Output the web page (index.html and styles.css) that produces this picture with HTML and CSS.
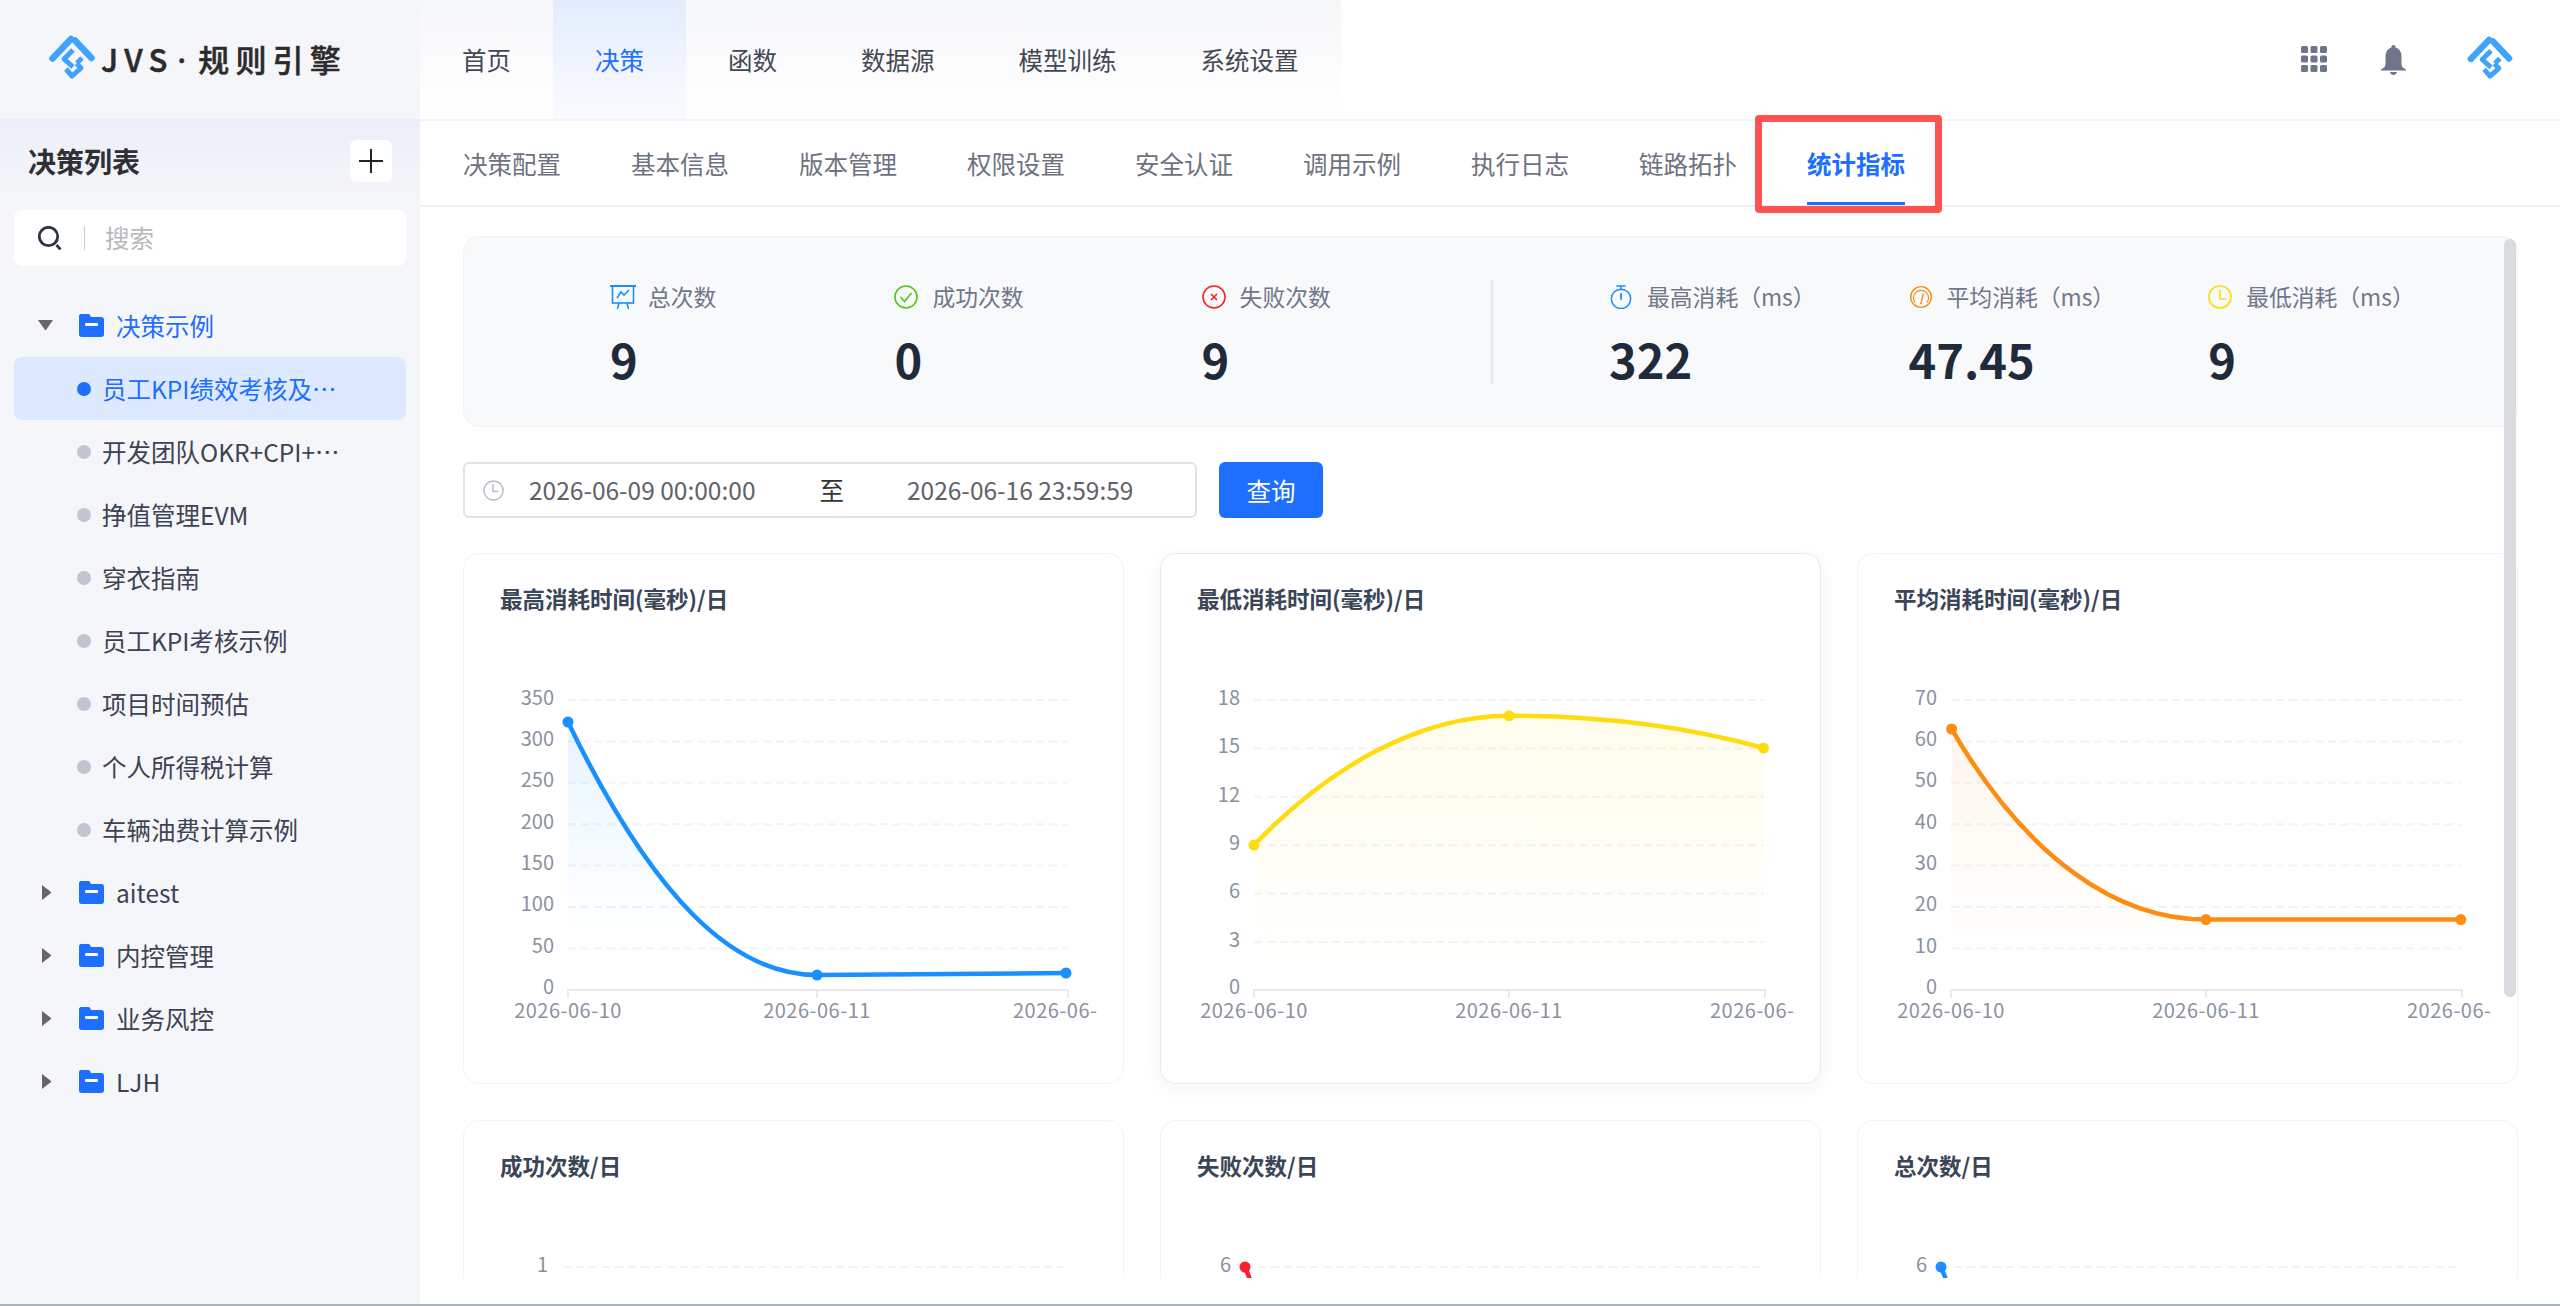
FILE: index.html
```html
<!DOCTYPE html>
<html lang="zh-CN">
<head>
    <meta charset="UTF-8">
    <meta name="viewport" content="width=device-width, initial-scale=1.0">
    <title>JVS 规则引擎 - 统计指标</title>
    <link rel="stylesheet" href="styles.css">
</head>
<body>

    <header class="topbar">
        <div class="brand">
            <svg class="brand-logo" viewBox="0 0 46 47">
                <g fill="none" stroke="#3fa2fb" stroke-linejoin="round">
                    <path d="M3.5 23.5 L22 4" stroke-width="6.5" stroke-linecap="round"/>
                    <path d="M26 5.5 L42.5 23" stroke-width="6.5" stroke-linecap="round"/>
                    <path d="M24 15 L15 24 L24 32 M33 23 L28 28" stroke-width="5"/>
                    <path d="M17 34 L23 41 L32 33 L27.5 28.5" stroke-width="5"/>
                </g>
            </svg>
            <span class="brand-name">JVS<span class="brand-dot">·</span>规则引擎</span>
        </div>
        <nav class="main-nav">
            <a class="nav-item">首页</a>
            <a class="nav-item active">决策</a>
            <a class="nav-item">函数</a>
            <a class="nav-item">数据源</a>
            <a class="nav-item">模型训练</a>
            <a class="nav-item">系统设置</a>
        </nav>
        <div class="top-actions">
            <svg class="icon-apps" viewBox="0 0 26 26" fill="#6d7588">
                <rect x="0" y="0" width="7" height="7" rx="1.5"/><rect x="9.5" y="0" width="7" height="7" rx="1.5"/><rect x="19" y="0" width="7" height="7" rx="1.5"/>
                <rect x="0" y="9.5" width="7" height="7" rx="1.5"/><rect x="9.5" y="9.5" width="7" height="7" rx="1.5"/><rect x="19" y="9.5" width="7" height="7" rx="1.5"/>
                <rect x="0" y="19" width="7" height="7" rx="1.5"/><rect x="9.5" y="19" width="7" height="7" rx="1.5"/><rect x="19" y="19" width="7" height="7" rx="1.5"/>
            </svg>
            <svg class="icon-bell" viewBox="0 0 25 30" fill="#6f768a">
                <path d="M12.5 0 C14 0 14.6 1.2 14.6 2.6 C19 4 20.5 8 20.5 12 L20.5 19 C20.5 21.5 22 23 25 24.5 L25 25.5 L0 25.5 L0 24.5 C3 23 4.5 21.5 4.5 19 L4.5 12 C4.5 8 6 4 10.4 2.6 C10.4 1.2 11 0 12.5 0 Z"/>
                <path d="M9 27 L16 27 C15.6 29 14.2 30 12.5 30 C10.8 30 9.4 29 9 27 Z"/>
            </svg>
            <svg class="user-logo" viewBox="0 0 46 47">
                <g fill="none" stroke="#3fa2fb" stroke-linejoin="round">
                    <path d="M3.5 23.5 L22 4" stroke-width="6.5" stroke-linecap="round"/>
                    <path d="M26 5.5 L42.5 23" stroke-width="6.5" stroke-linecap="round"/>
                    <path d="M24 15 L15 24 L24 32 M33 23 L28 28" stroke-width="5"/>
                    <path d="M17 34 L23 41 L32 33 L27.5 28.5" stroke-width="5"/>
                </g>
            </svg>
        </div>
    </header>

    <div class="layout">
        <aside class="sidebar">
            <div class="side-head">
                <h2>决策列表</h2>
                <button class="add-btn">
                    <svg viewBox="0 0 24 24" width="24" height="24"><path d="M12 0 V24 M0 12 H24" stroke="#222" stroke-width="2"/></svg>
                </button>
            </div>
            <div class="side-search">
                <svg viewBox="0 0 24 24" width="24" height="24" fill="none" stroke="#2d3547" stroke-width="2.8"><circle cx="10.5" cy="10.5" r="9.2"/><path d="M18.5 19 L22.5 23.5"/></svg>
                <span class="search-sep"></span>
                <span class="search-text">搜索</span>
            </div>
            <ul class="tree">
                <li class="tree-row folder open">
                    <span class="caret-down"></span>
                    <svg class="folder-icon" viewBox="0 0 25 23"><path d="M2 0 H9 C10 0 10.6 .4 11 1 L12 3 H22.5 C24 3 25 4 25 5.5 V20.5 C25 22 24 23 22.5 23 H2.5 C1 23 0 22 0 20.5 V2 C0 1 1 0 2 0 Z" fill="#1e6fff"/><rect x="6" y="9" width="13" height="3" rx="1" fill="#fff"/></svg>
                    <span class="row-text">决策示例</span>
                </li>
                <li class="tree-row leaf active"><i class="dot"></i><span class="row-text">员工KPI绩效考核及奖金计算</span></li>
                <li class="tree-row leaf"><i class="dot"></i><span class="row-text">开发团队OKR+CPI+奖金</span></li>
                <li class="tree-row leaf"><i class="dot"></i><span class="row-text">挣值管理EVM</span></li>
                <li class="tree-row leaf"><i class="dot"></i><span class="row-text">穿衣指南</span></li>
                <li class="tree-row leaf"><i class="dot"></i><span class="row-text">员工KPI考核示例</span></li>
                <li class="tree-row leaf"><i class="dot"></i><span class="row-text">项目时间预估</span></li>
                <li class="tree-row leaf"><i class="dot"></i><span class="row-text">个人所得税计算</span></li>
                <li class="tree-row leaf"><i class="dot"></i><span class="row-text">车辆油费计算示例</span></li>
                <li class="tree-row folder">
                    <span class="caret-right"></span>
                    <svg class="folder-icon" viewBox="0 0 25 23"><path d="M2 0 H9 C10 0 10.6 .4 11 1 L12 3 H22.5 C24 3 25 4 25 5.5 V20.5 C25 22 24 23 22.5 23 H2.5 C1 23 0 22 0 20.5 V2 C0 1 1 0 2 0 Z" fill="#1e6fff"/><rect x="6" y="9" width="13" height="3" rx="1" fill="#fff"/></svg>
                    <span class="row-text">aitest</span>
                </li>
                <li class="tree-row folder">
                    <span class="caret-right"></span>
                    <svg class="folder-icon" viewBox="0 0 25 23"><path d="M2 0 H9 C10 0 10.6 .4 11 1 L12 3 H22.5 C24 3 25 4 25 5.5 V20.5 C25 22 24 23 22.5 23 H2.5 C1 23 0 22 0 20.5 V2 C0 1 1 0 2 0 Z" fill="#1e6fff"/><rect x="6" y="9" width="13" height="3" rx="1" fill="#fff"/></svg>
                    <span class="row-text">内控管理</span>
                </li>
                <li class="tree-row folder">
                    <span class="caret-right"></span>
                    <svg class="folder-icon" viewBox="0 0 25 23"><path d="M2 0 H9 C10 0 10.6 .4 11 1 L12 3 H22.5 C24 3 25 4 25 5.5 V20.5 C25 22 24 23 22.5 23 H2.5 C1 23 0 22 0 20.5 V2 C0 1 1 0 2 0 Z" fill="#1e6fff"/><rect x="6" y="9" width="13" height="3" rx="1" fill="#fff"/></svg>
                    <span class="row-text">业务风控</span>
                </li>
                <li class="tree-row folder">
                    <span class="caret-right"></span>
                    <svg class="folder-icon" viewBox="0 0 25 23"><path d="M2 0 H9 C10 0 10.6 .4 11 1 L12 3 H22.5 C24 3 25 4 25 5.5 V20.5 C25 22 24 23 22.5 23 H2.5 C1 23 0 22 0 20.5 V2 C0 1 1 0 2 0 Z" fill="#1e6fff"/><rect x="6" y="9" width="13" height="3" rx="1" fill="#fff"/></svg>
                    <span class="row-text">LJH</span>
                </li>
            </ul>
        </aside>

        <main class="main">
            <div class="tabs">
                <a class="tab">决策配置</a>
                <a class="tab">基本信息</a>
                <a class="tab">版本管理</a>
                <a class="tab">权限设置</a>
                <a class="tab">安全认证</a>
                <a class="tab">调用示例</a>
                <a class="tab">执行日志</a>
                <a class="tab">链路拓扑</a>
                <a class="tab active">统计指标</a>
                <!-- red annotation box around the active tab -->
                <span class="tab-mark"></span>
            </div>

            <div class="content">
                <section class="summary">
                    <div class="stat-group left">
                        <div class="stat">
                            <div class="stat-label">
                                <svg class="stat-icon wide" viewBox="0 0 26 24" fill="none" stroke="#1890ff" stroke-width="1.6"><path d="M0 1 H26" stroke-width="2"/><rect x="2.5" y="1" width="21" height="17"/><path d="M7 13 L11 7 L14 10 L19 5"/><path d="M9 18 L7.5 24 M17 18 L18.5 24"/></svg>
                                总次数
                            </div>
                            <div class="stat-value">9</div>
                        </div>
                        <div class="stat">
                            <div class="stat-label">
                                <svg class="stat-icon" viewBox="0 0 24 24" fill="none" stroke="#52c41a" stroke-width="1.6"><circle cx="12" cy="12" r="11"/><path d="M6.5 12 L10.5 16.5 L17.5 8"/></svg>
                                成功次数
                            </div>
                            <div class="stat-value">0</div>
                        </div>
                        <div class="stat">
                            <div class="stat-label">
                                <svg class="stat-icon" viewBox="0 0 24 24" fill="none" stroke="#f5222d" stroke-width="1.6"><circle cx="12" cy="12" r="11"/><path d="M9 9 L15 15 M15 9 L9 15"/></svg>
                                失败次数
                            </div>
                            <div class="stat-value">9</div>
                        </div>
                    </div>
                    <span class="stat-sep"></span>
                    <div class="stat-group right">
                        <div class="stat">
                            <div class="stat-label">
                                <svg class="stat-icon" viewBox="0 0 24 26" fill="none" stroke="#1890ff" stroke-width="1.6"><circle cx="12" cy="15" r="10.5"/><path d="M7 1 H17 M12 1 V4.5"/><path d="M12 9 V16" stroke-width="2"/></svg>
                                最高消耗（ms）
                            </div>
                            <div class="stat-value">322</div>
                        </div>
                        <div class="stat">
                            <div class="stat-label">
                                <svg class="stat-icon" viewBox="0 0 24 26" fill="none" stroke="#fa8c16" stroke-width="1.5"><circle cx="12" cy="13" r="11.2"/><path d="M5.5 19 A8.2 8.2 0 1 1 18.5 19" stroke-width="1.3"/><path d="M14.5 9 L12.4 18" stroke-width="1.5"/><circle cx="12" cy="19.5" r="1.2" fill="#fa8c16" stroke="none"/></svg>
                                平均消耗（ms）
                            </div>
                            <div class="stat-value">47.45</div>
                        </div>
                        <div class="stat">
                            <div class="stat-label">
                                <svg class="stat-icon" viewBox="0 0 24 24" fill="none" stroke="#ffdc0f" stroke-width="1.7"><circle cx="12" cy="12" r="11"/><path d="M12 5 V14 H18"/></svg>
                                最低消耗（ms）
                            </div>
                            <div class="stat-value">9</div>
                        </div>
                    </div>
                </section>

                <div class="query-bar">
                    <div class="date-range">
                        <svg viewBox="0 0 22 24" width="21" height="23" fill="none" stroke="#b9bcc6" stroke-width="1.5"><circle cx="11" cy="12" r="10"/><path d="M10.5 5 V13 H16"/></svg>
                        <span class="date-val start">2026-06-09 00:00:00</span>
                        <span class="date-to">至</span>
                        <span class="date-val">2026-06-16 23:59:59</span>
                    </div>
                    <button class="query-btn">查询</button>
                </div>

                <div class="chart-grid">
                    <div class="chart-card">
                        <h3>最高消耗时间(毫秒)/日</h3>
                        <svg class="chart" viewBox="0 0 632 420">
                            <defs><linearGradient id="fill-a" gradientUnits="userSpaceOnUse" x1="0" y1="82" x2="0" y2="300"><stop offset="0" stop-color="#1890ff" stop-opacity=".1"/><stop offset="1" stop-color="#1890ff" stop-opacity="0"/></linearGradient></defs>
                            <g class="grid-lines">
                                <path d="M104 60 H603 M104 101.4 H603 M104 142.8 H603 M104 184.2 H603 M104 225.6 H603 M104 267 H603 M104 308.4 H603"/>
                            </g>
                            <path class="axis" d="M104 358 V350 H353 V358 M353 350 H604 V358"/>
                            <g class="y-labels" text-anchor="end">
                                <text x="90" y="64">350</text><text x="90" y="105">300</text><text x="90" y="146">250</text><text x="90" y="188">200</text><text x="90" y="229">150</text><text x="90" y="270">100</text><text x="90" y="312">50</text><text x="90" y="353">0</text>
                            </g>
                            <g class="x-labels">
                                <text x="104" y="378" text-anchor="middle">2026-06-10</text><text x="353" y="378" text-anchor="middle">2026-06-11</text><text x="549" y="378">2026-06-</text>
                            </g>
                            <path d="M104 82 C190 260 270 335 353 335 C436 335 519 334 602 333 V350 H104 Z" fill="url(#fill-a)"/>
                            <path class="line" d="M104 82 C190 260 270 335 353 335 C436 335 519 334 602 333" stroke="#1890ff"/>
                            <g fill="#1890ff"><circle cx="104" cy="82" r="5.5"/><circle cx="353" cy="335" r="5.5"/><circle cx="602" cy="333" r="5.5"/></g>
                        </svg>
                    </div>

                    <div class="chart-card hovered">
                        <h3>最低消耗时间(毫秒)/日</h3>
                        <svg class="chart" viewBox="0 0 632 420">
                            <defs><linearGradient id="fill-b" gradientUnits="userSpaceOnUse" x1="0" y1="75" x2="0" y2="330"><stop offset="0" stop-color="#fadb14" stop-opacity=".08"/><stop offset="1" stop-color="#fadb14" stop-opacity="0"/></linearGradient></defs>
                            <g class="grid-lines">
                                <path d="M93 60 H603 M93 108.4 H603 M93 156.8 H603 M93 205.2 H603 M93 253.6 H603 M93 302 H603"/>
                            </g>
                            <path class="axis" d="M93 358 V350 H348 V358 M348 350 H604 V358"/>
                            <g class="y-labels" text-anchor="end">
                                <text x="79" y="64">18</text><text x="79" y="112">15</text><text x="79" y="161">12</text><text x="79" y="209">9</text><text x="79" y="257">6</text><text x="79" y="306">3</text><text x="79" y="353">0</text>
                            </g>
                            <g class="x-labels">
                                <text x="93" y="378" text-anchor="middle">2026-06-10</text><text x="348" y="378" text-anchor="middle">2026-06-11</text><text x="549" y="378">2026-06-</text>
                            </g>
                            <path d="M93 205 C170 125 260 75.7 348 75.7 C430 75.7 520 85 602.5 108 V350 H93 Z" fill="url(#fill-b)"/>
                            <path class="line" d="M93 205 C170 125 260 75.7 348 75.7 C430 75.7 520 85 602.5 108" stroke="#ffdc0f"/>
                            <g fill="#ffdc0f"><circle cx="93" cy="205" r="5.5"/><circle cx="348" cy="75.7" r="5.5"/><circle cx="602.5" cy="108" r="5.5"/></g>
                        </svg>
                    </div>

                    <div class="chart-card">
                        <h3>平均消耗时间(毫秒)/日</h3>
                        <svg class="chart" viewBox="0 0 632 420">
                            <defs><linearGradient id="fill-c" gradientUnits="userSpaceOnUse" x1="0" y1="89" x2="0" y2="310"><stop offset="0" stop-color="#fa8c16" stop-opacity=".08"/><stop offset="1" stop-color="#fa8c16" stop-opacity="0"/></linearGradient></defs>
                            <g class="grid-lines">
                                <path d="M93 60 H603 M93 101.4 H603 M93 142.8 H603 M93 184.2 H603 M93 225.6 H603 M93 267 H603 M93 308.4 H603"/>
                            </g>
                            <path class="axis" d="M93 358 V350 H348 V358 M348 350 H604 V358"/>
                            <g class="y-labels" text-anchor="end">
                                <text x="79" y="64">70</text><text x="79" y="105">60</text><text x="79" y="146">50</text><text x="79" y="188">40</text><text x="79" y="229">30</text><text x="79" y="270">20</text><text x="79" y="312">10</text><text x="79" y="353">0</text>
                            </g>
                            <g class="x-labels">
                                <text x="93" y="378" text-anchor="middle">2026-06-10</text><text x="348" y="378" text-anchor="middle">2026-06-11</text><text x="549" y="378">2026-06-</text>
                            </g>
                            <path d="M93.6 89 C170 220 260 279.6 348 279.6 H602.8 V350 H93.6 Z" fill="url(#fill-c)"/>
                            <path class="line" d="M93.6 89 C170 220 260 279.6 348 279.6 H602.8" stroke="#ff8c12"/>
                            <g fill="#ff8c12"><circle cx="93.6" cy="89" r="5.5"/><circle cx="348" cy="279.6" r="5.5"/><circle cx="602.8" cy="279.6" r="5.5"/></g>
                        </svg>
                    </div>

                    <div class="chart-card">
                        <h3>成功次数/日</h3>
                        <svg class="chart" viewBox="0 0 632 420">
                            <g class="grid-lines"><path d="M99 60 H599"/></g>
                            <g class="y-labels" text-anchor="end"><text x="84" y="64">1</text></g>
                        </svg>
                    </div>

                    <div class="chart-card">
                        <h3>失败次数/日</h3>
                        <svg class="chart" viewBox="0 0 632 420">
                            <g class="grid-lines"><path d="M84 60 H603"/></g>
                            <g class="y-labels" text-anchor="end"><text x="70" y="64">6</text></g>
                            <path class="line" d="M84 60 L94 85" stroke="#f5222d"/>
                            <circle cx="84" cy="60" r="5.5" fill="#f5222d"/>
                        </svg>
                    </div>

                    <div class="chart-card">
                        <h3>总次数/日</h3>
                        <svg class="chart" viewBox="0 0 632 420">
                            <g class="grid-lines"><path d="M83 60 H603"/></g>
                            <g class="y-labels" text-anchor="end"><text x="69" y="64">6</text></g>
                            <path class="line" d="M83 60 L93 85" stroke="#1890ff"/>
                            <circle cx="83" cy="60" r="5.5" fill="#1890ff"/>
                        </svg>
                    </div>
                </div>

                <span class="scroll-thumb"></span>
            </div>
        </main>
    </div>

    <div class="page-line"></div>

</body>
</html>
```

FILE: styles.css
```css
/* Basic Styles */
* {
    box-sizing: border-box;
}

html,
body {
    margin: 0;
    height: 1306px;
    overflow: hidden;
}

body {
    font-family: "Noto Sans CJK SC", "Noto Sans", sans-serif;
    font-size: 24.5px;
    background-color: #fff;
    color: #3d4354;
}

h2,
h3,
ul {
    margin: 0;
    padding: 0;
}

/* Top bar */
.topbar {
    display: flex;
    height: 119px;
}

.brand {
    width: 420px;
    display: flex;
    align-items: center;
    padding-left: 49px;
    background-color: #f5f6f9;
}

.brand-logo {
    width: 46px;
    height: 47px;
    margin-top: -3px;
}

.brand-name {
    margin-left: 6px;
    font-size: 31px;
    font-weight: 500;
    letter-spacing: 6.2px;
    color: #2b2b2b;
    line-height: 40px;
    -webkit-text-stroke: 0.5px #2b2b2b;
}

/* latin dot, the CJK one is a full em wide */
.brand-dot {
    margin: 0 6px 0 4px;
    font-family: "Noto Sans", sans-serif;
}

.main-nav {
    display: flex;
    background: linear-gradient(180deg, #f6f7f9 0%, #fff 100%);
}

.nav-item {
    padding: 0 42px;
    line-height: 119px;
    color: #434854;
}

.nav-item.active {
    color: #1e6fff;
    background: linear-gradient(180deg, #e3ecfd 0%, #fafbff 100%);
}

.top-actions {
    margin-left: auto;
    display: flex;
    align-items: center;
    padding-right: 47px;
}

.icon-apps {
    width: 26px;
    height: 26px;
    margin-top: -1px;
}

.icon-bell {
    width: 25px;
    height: 30px;
    margin-left: 54px;
    margin-top: 0;
}

.user-logo {
    width: 46px;
    height: 46px;
    margin-left: 61px;
    margin-top: -1px;
}

.layout {
    display: flex;
    height: 1185px;
}

/* Sidebar */
.sidebar {
    width: 420px;
    flex-shrink: 0;
    background: linear-gradient(180deg, #ebeff8 0, #f5f6f9 85px);
}

.side-head {
    display: flex;
    align-items: center;
    justify-content: space-between;
    height: 42px;
    margin-top: 21px;
    padding: 0 28px;
}

.side-head h2 {
    font-size: 28px;
    font-weight: 700;
    color: #2f3033;
}

.add-btn {
    width: 42px;
    height: 42px;
    padding: 0;
    border: none;
    border-radius: 6px;
    background-color: #fff;
    display: flex;
    align-items: center;
    justify-content: center;
}

.side-search {
    display: flex;
    align-items: center;
    height: 56px;
    margin: 28px 14px 0;
    padding-left: 24px;
    border-radius: 8px;
    background-color: #fff;
}

.search-sep {
    width: 1px;
    height: 24px;
    margin: 0 20px 0 22px;
    background-color: #c9ccd3;
}

.search-text {
    color: #b8b9bd;
    padding-bottom: 2px;
}

.tree {
    list-style: none;
    margin-top: 28px;
}

.tree-row {
    display: flex;
    align-items: center;
    height: 63px;
    margin: 0 14px;
    border-radius: 8px;
}

.row-text {
    white-space: nowrap;
    overflow: hidden;
    text-overflow: ellipsis;
}

.folder {
    padding-left: 24px;
}

.folder.open .row-text {
    color: #1e6fff;
}

.caret-down,
.caret-right {
    width: 15px;
    height: 15px;
    margin-right: 26px;
    flex-shrink: 0;
}

.caret-down {
    border-left: 7.5px solid transparent;
    border-right: 7.5px solid transparent;
    border-top: 10px solid #666;
    margin-top: 4px;
}

.caret-right {
    border-top: 7.5px solid transparent;
    border-bottom: 7.5px solid transparent;
    border-left: 9px solid #666;
    margin-left: 4px;
    margin-right: 22px;
}

.folder-icon {
    width: 25px;
    height: 23px;
    margin-right: 12px;
    flex-shrink: 0;
}

.leaf {
    padding-left: 63px;
}

.leaf .dot {
    width: 14px;
    height: 14px;
    margin-right: 11px;
    border-radius: 50%;
    background-color: #c2c4d0;
    flex-shrink: 0;
}

.leaf .row-text {
    max-width: 238px;
}

.leaf.active {
    background-color: #dde9ff;
    color: #1e6fff;
}

.leaf.active .dot {
    background-color: #1e6fff;
}

/* Main area */
.main {
    flex: 1;
    min-width: 0;
    display: flex;
    flex-direction: column;
    padding-bottom: 26px;
}

.tabs {
    position: relative;
    display: flex;
    height: 88px;
    padding-left: 8px;
    border-top: 2px solid #f3f4f6;
    border-bottom: 2px solid #eef0f3;
}

.tab {
    position: relative;
    padding: 0 35px;
    line-height: 86px;
    color: #6d7280;
}

.tab.active {
    color: #1e6fff;
    font-weight: 700;
}

.tab.active::after {
    content: "";
    position: absolute;
    left: 35px;
    right: 35px;
    bottom: 0;
    height: 3px;
    background-color: #1e6fff;
}

.tab-mark {
    position: absolute;
    left: 1335px;
    top: -6px;
    width: 187px;
    height: 98px;
    border: 7px solid #ff5353;
    border-radius: 4px;
}

.content {
    position: relative;
    flex: 1;
    min-height: 0;
    overflow: hidden;
    padding: 29px 42px 0 43px;
}

.scroll-thumb {
    position: absolute;
    top: 32px;
    right: 44px;
    width: 12px;
    height: 758px;
    border-radius: 6px;
    background-color: #d9dbde;
}

/* Summary */
.summary {
    display: flex;
    align-items: center;
    height: 191px;
    border: 1px solid #f2f3f5;
    border-radius: 16px;
    background-color: #f8f9fb;
}

.stat-group {
    display: flex;
    margin-top: 8px;
}

.stat-group.left {
    width: 1027px;
    padding-left: 146px;
    gap: 178px;
}

.stat-group.right {
    padding-left: 116px;
    gap: 93px;
}

.stat-sep {
    width: 2px;
    height: 104px;
    background-color: #e6e8eb;
    flex-shrink: 0;
}

.stat-label {
    display: flex;
    align-items: center;
    height: 26px;
    font-size: 22.8px;
    color: #6f7789;
    white-space: nowrap;
}

.stat-icon {
    width: 24px;
    height: 24px;
    margin-right: 14px;
    flex-shrink: 0;
}

.stat-icon.wide {
    width: 26px;
    margin-right: 12px;
}

.stat-value {
    margin-top: 20px;
    font-size: 47px;
    font-weight: 700;
    line-height: 58px;
    color: #1f2a3d;
}

/* Date filter */
.query-bar {
    display: flex;
    gap: 22px;
    margin-top: 35px;
}

.date-range {
    display: flex;
    align-items: center;
    width: 734px;
    height: 56px;
    padding-left: 18px;
    border: 2px solid #e0e2e8;
    border-radius: 6px;
}

.date-val {
    color: #5f6268;
    white-space: nowrap;
    padding-bottom: 1px;
}

.date-val.start {
    margin-left: 25px;
}

.date-to {
    margin: 0 63px 0 64px;
    color: #333;
    padding-bottom: 1px;
}

.query-btn {
    width: 104px;
    height: 56px;
    padding: 0;
    border: none;
    border-radius: 6px;
    background-color: #1e6fff;
    color: #fff;
    font-family: inherit;
    font-size: 24.5px;
}

/* Charts */
.chart-grid {
    display: grid;
    grid-template-columns: repeat(3, 661px);
    gap: 36px;
    margin-top: 35px;
}

.chart-card {
    height: 531px;
    border: 1px solid #f2f3f6;
    border-radius: 16px;
    background-color: #fff;
}

.chart-card.hovered {
    border-color: #e6e9f2;
    box-shadow: 0 4px 20px rgba(20, 30, 80, 0.05);
}

.chart-card h3 {
    padding: 29px 36px 0;
    height: 86px;
    font-size: 22.5px;
    font-weight: 700;
    line-height: 30px;
    color: #3a4658;
}

.chart {
    display: block;
    width: 632px;
    height: 420px;
    overflow: visible;
}

.grid-lines path {
    fill: none;
    stroke: #f2f3f5;
    stroke-width: 2;
    stroke-dasharray: 8 5;
}

.axis {
    fill: none;
    stroke: #e8e9ef;
    stroke-width: 2;
}

.line {
    fill: none;
    stroke-width: 4.5;
    stroke-linecap: round;
}

.chart text {
    font-size: 20px;
    fill: #8a92a0;
}

.y-labels {
    transform: translateY(1px);
}

.x-labels text {
    letter-spacing: 0.5px;
}

.page-line {
    height: 2px;
    background-color: #a6b3b9;
}
```
